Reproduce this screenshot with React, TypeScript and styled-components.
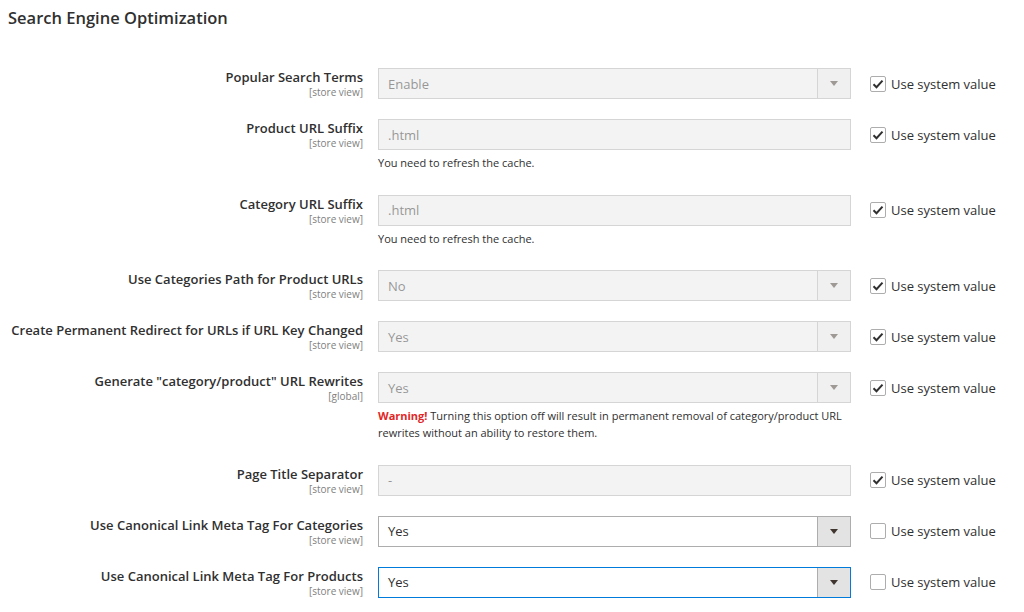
import React, { FC } from 'react';
import styled, { createGlobalStyle, css } from 'styled-components';

const GlobalStyle = createGlobalStyle`
  body {
    margin: 0;
    background: #fff;
    color: #303030;
    font-family: 'Open Sans', 'Liberation Sans', sans-serif;
  }
`;

const Page = styled.div`
  padding: 8px 8px 0;
`;

const Title = styled.h1`
  margin: 0;
  font-size: 16.5px;
  font-weight: 600;
  line-height: 20px;
  color: #303030;
`;

const Fieldset = styled.div`
  margin-top: 40px;
  display: flex;
  flex-direction: column;
  gap: 20px;
`;

const Row = styled.div`
  display: grid;
  grid-template-columns: 355px 473px auto;
  column-gap: 15px;
  align-items: start;
`;

const LabelCell = styled.div`
  display: flex;
  flex-direction: column;
  align-items: flex-end;
  text-align: right;
  white-space: nowrap;
`;

const LabelText = styled.span`
  font-size: 13px;
  font-weight: 600;
  line-height: 18px;
  color: #303030;
`;

const Scope = styled.span`
  font-size: 10px;
  line-height: 12px;
  color: #808080;
`;

const ControlCell = styled.div`
  display: flex;
  flex-direction: column;
`;

const Control = styled.div<{ $disabled: boolean; $focused?: boolean }>`
  display: flex;
  align-items: stretch;
  height: 31px;
  box-sizing: border-box;
  border: 1px solid ${(p) => (p.$focused ? '#007bdb' : '#adadad')};
  background: #fff;
  ${(p) =>
    p.$disabled &&
    css`
      background: #e9e9e9;
      opacity: 0.5;
    `}
`;

const Value = styled.span`
  flex: 1;
  display: flex;
  align-items: center;
  padding-left: 9px;
  font-size: 13px;
  color: #303030;
`;

const Arrow = styled.span`
  width: 32px;
  display: flex;
  align-items: center;
  justify-content: center;
  background: #e3e3e3;
  border-left: 1px solid #adadad;
`;

const Caret = styled.span`
  width: 0;
  height: 0;
  border-style: solid;
  border-width: 5px 4px 0;
  border-color: #41362f transparent transparent;
`;

const Note = styled.div`
  margin: 4px 0 3.5px;
  font-size: 11px;
  line-height: 17px;
  color: #303030;
`;

const Warn = styled.strong`
  color: #e22626;
  font-weight: 700;
`;

const SystemCell = styled.label`
  display: flex;
  align-items: center;
  height: 31px;
  padding-left: 4px;
`;

const Checkbox = styled.span`
  width: 16px;
  height: 16px;
  box-sizing: border-box;
  border: 1px solid #adadad;
  border-radius: 2px;
  background: #fff;
  display: flex;
  align-items: center;
  justify-content: center;
`;

const SystemText = styled.span`
  margin-left: 5px;
  font-size: 13px;
  color: #303030;
`;

interface Field {
  label: string;
  scope: string;
  kind: 'select' | 'text';
  value: string;
  disabled: boolean;
  focused?: boolean;
  note?: React.ReactNode;
}

const cacheNote = 'You need to refresh the cache.';

const fields: Field[] = [
  { label: 'Popular Search Terms', scope: '[store view]', kind: 'select', value: 'Enable', disabled: true },
  { label: 'Product URL Suffix', scope: '[store view]', kind: 'text', value: '.html', disabled: true, note: cacheNote },
  { label: 'Category URL Suffix', scope: '[store view]', kind: 'text', value: '.html', disabled: true, note: cacheNote },
  { label: 'Use Categories Path for Product URLs', scope: '[store view]', kind: 'select', value: 'No', disabled: true },
  { label: 'Create Permanent Redirect for URLs if URL Key Changed', scope: '[store view]', kind: 'select', value: 'Yes', disabled: true },
  {
    label: 'Generate "category/product" URL Rewrites',
    scope: '[global]',
    kind: 'select',
    value: 'Yes',
    disabled: true,
    note: (
      <>
        <Warn>Warning!</Warn> Turning this option off will result in permanent removal of category/product URL
        rewrites without an ability to restore them.
      </>
    ),
  },
  { label: 'Page Title Separator', scope: '[store view]', kind: 'text', value: '-', disabled: true },
  { label: 'Use Canonical Link Meta Tag For Categories', scope: '[store view]', kind: 'select', value: 'Yes', disabled: false },
  { label: 'Use Canonical Link Meta Tag For Products', scope: '[store view]', kind: 'select', value: 'Yes', disabled: false, focused: true },
];

const App: FC = () => {
  return (
    <Page>
      <GlobalStyle />
      <Title>Search Engine Optimization</Title>
      <Fieldset>
        {fields.map((f) => (
          <Row key={f.label}>
            <LabelCell>
              <LabelText>{f.label}</LabelText>
              <Scope>{f.scope}</Scope>
            </LabelCell>
            <ControlCell>
              <Control $disabled={f.disabled} $focused={f.focused}>
                <Value>{f.value}</Value>
                {f.kind === 'select' && (
                  <Arrow>
                    <Caret />
                  </Arrow>
                )}
              </Control>
              {f.note && <Note>{f.note}</Note>}
            </ControlCell>
            <SystemCell>
              <Checkbox>
                {f.disabled && (
                  <svg width="12" height="10" viewBox="0 0 12 10">
                    <path d="M1.5 5.2 L4.5 8.2 L10.5 1.6" fill="none" stroke="#303030" strokeWidth="2" />
                  </svg>
                )}
              </Checkbox>
              <SystemText>Use system value</SystemText>
            </SystemCell>
          </Row>
        ))}
      </Fieldset>
    </Page>
  );
};

export default App;
